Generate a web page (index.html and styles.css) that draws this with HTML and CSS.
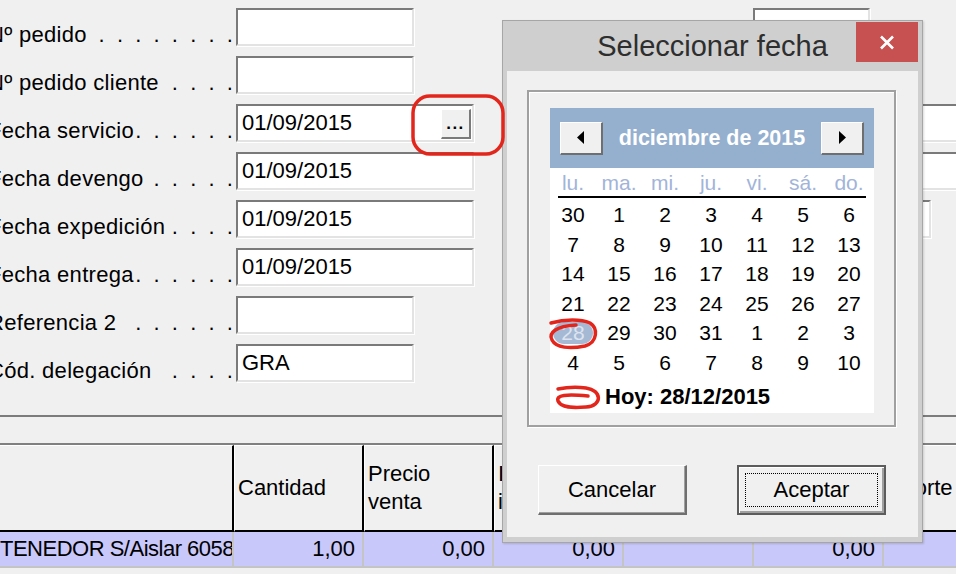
FILE: index.html
```html
<!DOCTYPE html>
<html lang="es">
<head>
  <meta charset="UTF-8" />
  <title>Pedido - Seleccionar fecha</title>
  <link rel="stylesheet" href="styles.css">
</head>
<body>

  <div class="screen">
    <div class="form">
      <div class="fields">
        <div class="row">
          <div class="label"><span>Nº pedido</span><span class="leader">. . . . . . . .</span></div>
          <div class="field short"></div>
        </div>
        <div class="row">
          <div class="label"><span>Nº pedido cliente</span><span class="leader">. . . .</span></div>
          <div class="field short"></div>
        </div>
        <div class="row">
          <div class="label"><span>Fecha servicio</span><span class="leader">. . . . . .</span></div>
          <div class="field date">01/09/2015<button class="pick">...</button></div>
        </div>
        <div class="row">
          <div class="label"><span>Fecha devengo</span><span class="leader">. . . . .</span></div>
          <div class="field date">01/09/2015</div>
        </div>
        <div class="row">
          <div class="label"><span>Fecha expedición</span><span class="leader">. . . .</span></div>
          <div class="field date">01/09/2015</div>
        </div>
        <div class="row">
          <div class="label"><span>Fecha entrega</span><span class="leader">. . . . . .</span></div>
          <div class="field date">01/09/2015</div>
        </div>
        <div class="row">
          <div class="label"><span>Referencia 2</span><span class="leader">. . . . . .</span></div>
          <div class="field short"></div>
        </div>
        <div class="row">
          <div class="label"><span>Cód. delegación</span><span class="leader">. . . .</span></div>
          <div class="field short">GRA</div>
        </div>
      </div>

      <div class="fields-right">
        <div class="row"><div class="field tiny"></div></div>
        <div class="row"></div>
        <div class="row"><div class="field wide"></div></div>
        <div class="row"><div class="field wide"></div></div>
        <div class="row"><div class="field short"></div></div>
      </div>
    </div>

    <div class="divider"></div>

    <div class="grid">
      <div class="grid-head">
        <div class="cell first"></div>
        <div class="cell">Cantidad</div>
        <div class="cell">Precio<br>venta</div>
        <div class="cell">Importe<br>iva</div>
        <div class="cell"></div>
        <div class="cell"></div>
        <div class="cell last"><span>Importe</span></div>
      </div>
      <div class="grid-row">
        <div class="cell first">TENEDOR S/Aislar 6058</div>
        <div class="cell num">1,00</div>
        <div class="cell num">0,00</div>
        <div class="cell num">0,00</div>
        <div class="cell num"></div>
        <div class="cell num">0,00</div>
        <div class="cell num"></div>
      </div>
    </div>
  </div>

  <div class="dialog">
    <div class="titlebar">
      <span></span>
      <span class="caption">Seleccionar fecha</span>
      <button class="close">
        <svg width="16" height="15" viewBox="0 0 16 15"><path d="M2 1.5 L14 13.5 M14 1.5 L2 13.5" stroke="#fff" stroke-width="2.6" fill="none"/></svg>
      </button>
    </div>

    <div class="client">
      <div class="cal-frame">
        <div class="calendar">
          <div class="cal-head">
            <button class="nav"><svg width="8" height="13" viewBox="0 0 8 13"><path d="M7 0 L0 6.5 L7 13 Z" fill="#000"/></svg></button>
            <span class="month">diciembre de 2015</span>
            <button class="nav"><svg width="8" height="13" viewBox="0 0 8 13"><path d="M1 0 L8 6.5 L1 13 Z" fill="#000"/></svg></button>
          </div>
          <div class="weekdays">
            <span>lu.</span><span>ma.</span><span>mi.</span><span>ju.</span><span>vi.</span><span>sá.</span><span>do.</span>
          </div>
          <div class="days">
            <span>30</span><span>1</span><span>2</span><span>3</span><span>4</span><span>5</span><span>6</span>
            <span>7</span><span>8</span><span>9</span><span>10</span><span>11</span><span>12</span><span>13</span>
            <span>14</span><span>15</span><span>16</span><span>17</span><span>18</span><span>19</span><span>20</span>
            <span>21</span><span>22</span><span>23</span><span>24</span><span>25</span><span>26</span><span>27</span>
            <span><b class="selected">28</b></span><span>29</span><span>30</span><span>31</span><span>1</span><span>2</span><span>3</span>
            <span>4</span><span>5</span><span>6</span><span>7</span><span>8</span><span>9</span><span>10</span>
          </div>
          <div class="today">Hoy: 28/12/2015</div>
        </div>
      </div>

      <div class="actions">
        <button class="btn">Cancelar</button>
        <button class="btn default"><span class="focus">Aceptar</span></button>
      </div>
    </div>
  </div>

  <svg class="marks" width="956" height="574" viewBox="0 0 956 574">
    <rect x="413" y="96" width="90" height="58" rx="17" ry="17"/>
    <path d="M551 323 C565 319 581 319 590 323 C598 328 598 342 585 346 C570 349 556 348 552 340 C548 333 556 326 576 325"/>
    <path d="M558 389 C568 387 578 387 586 388 C602 390 603 406 586 407 C573 408 561 408 558 401 C556 395 566 394 588 396"/>
  </svg>

</body>
</html>
```

FILE: styles.css
```css
:root {
  --face: #f0f0f0;
  --shadow: #7a7a7a;
  --light: #e3e3e3;
  --frame: #cfcfcf;
  --cal-blue: #95b0cf;
  --row-sel: #c8c8fa;
  --mark: #e2261c;
}

* {
  box-sizing: border-box;
}

body {
  margin: 0;
  background: var(--face);
  color: #000;
  font-family: 'Liberation Sans', Arial, sans-serif;
  font-size: 22px;
  overflow: hidden;
}

button {
  font: inherit;
  color: inherit;
  padding: 0;
  cursor: pointer;
}

.screen {
  width: 956px;
  height: 574px;
  overflow: hidden;
}

/* header form */

.form {
  display: flex;
  height: 415px;
  padding-top: 8px;
}

.fields {
  width: 765px;
  flex-shrink: 0;
  margin-left: -12px;
}

.fields-right {
  flex-shrink: 0;
}

.row {
  height: 48px;
  display: flex;
  align-items: flex-start;
}

.label {
  width: 248px;
  display: flex;
  justify-content: space-between;
  padding: 14px 0 0 0;
  line-height: 26px;
  letter-spacing: 0.3px;
  white-space: pre;
}

.leader {
  letter-spacing: 3.05px;
}

.field {
  height: 38px;
  display: flex;
  align-items: center;
  padding-left: 4px;
  background: #fff;
  border: 2px solid;
  border-color: var(--shadow) var(--light) var(--light) var(--shadow);
  box-shadow: 1px 1px 0 #fff;
  line-height: 26px;
  white-space: nowrap;
}

.field.tiny { width: 117px; }
.field.short { width: 178px; }
.field.date { width: 238px; }
.field.wide { width: 260px; }

.pick {
  width: 30px;
  height: 30px;
  margin: auto 1px 1px auto;
  align-self: flex-end;
  background: var(--face);
  border-style: solid;
  border-width: 1px 2px 2px 1px;
  border-color: #fff var(--shadow) var(--shadow) #fff;
  font-size: 17px;
  font-weight: bold;
  letter-spacing: 1.5px;
  line-height: 14px;
}

.divider {
  height: 30px;
  border-top: 2px solid #7c7c7c;
  border-bottom: 2px solid #808080;
}

/* grid */

.grid {
  margin-left: -10px;
  width: 1100px;
}

.grid-head,
.grid-row {
  display: flex;
}

.grid .cell {
  width: 130px;
  flex-shrink: 0;
  overflow: hidden;
  white-space: nowrap;
}

.grid .cell.first {
  width: 244px;
}

.grid-head .cell {
  height: 87px;
  display: flex;
  align-items: center;
  padding-left: 3px;
  line-height: 28px;
  border-top: 1px solid #fff;
  border-left: 1px solid #fff;
  border-right: 2px solid #000;
  border-bottom: 2px solid #000;
}

.grid-head .cell.last {
  padding-left: 1px;
}

.grid-head .cell.last span {
  margin-left: -8px;
}

.grid-row .cell {
  height: 36px;
  line-height: 34px;
  background: var(--row-sel);
  border-right: 2px solid #c4c4c4;
  border-bottom: 2px solid #c4c4c4;
}

.grid-row .cell.first {
  padding-left: 10px;
  letter-spacing: -0.5px;
}

.grid-row .cell.num {
  text-align: right;
  padding-right: 7px;
}

/* date dialog */

.dialog {
  position: absolute;
  left: 502px;
  top: 20px;
  width: 421px;
  height: 523px;
  display: flex;
  flex-direction: column;
  padding: 0 4px 5px;
  background: var(--frame);
  border: 1px solid #a6a6a6;
  box-shadow: 1px 1px 2px rgba(0,0,0,0.15);
}

.titlebar {
  height: 50px;
  display: grid;
  grid-template-columns: 62px 1fr 62px;
  align-items: center;
}

.caption {
  text-align: center;
  font-size: 29px;
  color: #2e2e2e;
}

.close {
  width: 62px;
  height: 40px;
  align-self: start;
  margin-top: 1px;
  border: none;
  background: #c75050;
  display: flex;
  align-items: center;
  justify-content: center;
}

.client {
  flex: 1;
  background: var(--face);
  padding: 19px 0 0 20px;
}

.cal-frame {
  width: 369px;
  height: 337px;
  padding: 16px 0 0 21px;
  border: 2px solid #a0a0a0;
  box-shadow: 1px 1px 0 #fff, inset 1px 1px 0 #fff;
}

.calendar {
  width: 324px;
  height: 305px;
  background: #fff;
  font-size: 21px;
}

.cal-head {
  height: 60px;
  background: var(--cal-blue);
  display: flex;
  align-items: center;
  justify-content: space-between;
  padding: 0 10px;
}

.nav {
  width: 43px;
  height: 33px;
  display: flex;
  align-items: center;
  justify-content: center;
  background: var(--face);
  border-style: solid;
  border-width: 1px 2px 2px 1px;
  border-color: #fff #6f6f6f #6f6f6f #fff;
}

.month {
  color: #fff;
  font-weight: bold;
  font-size: 21.5px;
}

.weekdays,
.days {
  display: grid;
  grid-template-columns: repeat(7, 46px);
  text-align: center;
}

.weekdays {
  height: 30px;
  line-height: 30px;
  color: #a2b4d9;
  position: relative;
}

.weekdays::after {
  content: '';
  position: absolute;
  left: 8px;
  width: 308px;
  bottom: 0;
  height: 2px;
  background: #000;
}

.days {
  margin-top: 2px;
  grid-auto-rows: 29.5px;
  line-height: 29.5px;
}

.selected {
  display: inline-block;
  width: 40px;
  line-height: 22px;
  font-weight: normal;
  color: #dde4ef;
  background: #a6b9d4;
  border-radius: 11px;
}

.today {
  margin-top: 8px;
  padding-left: 55px;
  line-height: 24px;
  font-size: 22px;
  font-weight: bold;
}

.actions {
  width: 369px;
  margin-top: 38px;
  padding: 0 10px 0 11px;
  display: flex;
  justify-content: space-between;
}

.btn {
  width: 149px;
  height: 50px;
  background: var(--face);
  border-style: solid;
  border-width: 1px 2px 2px 1px;
  border-color: #fff #6f6f6f #6f6f6f #fff;
  box-shadow: inset -1px -1px 0 #a0a0a0;
}

.btn.default {
  border: 2px solid #5c5c5c;
  box-shadow: inset 1px 1px 0 #fff, inset -2px -2px 0 #a0a0a0;
  padding: 6px;
}

.focus {
  display: flex;
  align-items: center;
  justify-content: center;
  height: 100%;
  border: 1px dotted #000;
}

/* hand-drawn marks over the screenshot */

.marks {
  position: absolute;
  left: 0;
  top: 0;
  pointer-events: none;
  fill: none;
  stroke: var(--mark);
  stroke-width: 3.5;
  stroke-linecap: round;
  stroke-linejoin: round;
}
```
